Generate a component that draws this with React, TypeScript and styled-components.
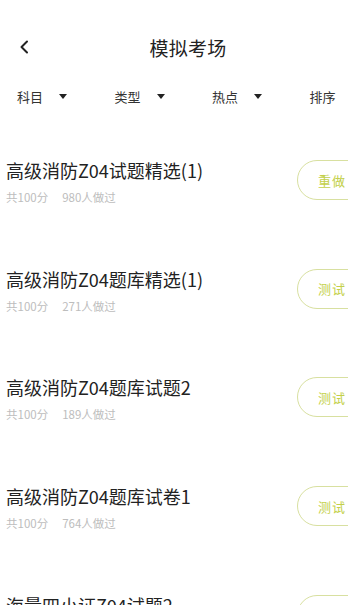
import React from "react";
import styled, { createGlobalStyle } from "styled-components";

const Global = createGlobalStyle`
  html, body { margin: 0; padding: 0; background: #fff; overflow: hidden; }
  body { font-family: "Noto Sans CJK SC", "Noto Sans", sans-serif; }
`;

const Page = styled.div`
  width: 390px;
  height: 605px;
  overflow: hidden;
  background: #fff;
`;

const Header = styled.div`
  position: relative;
  height: 50px;
  margin-top: 22px;
  display: flex;
  align-items: center;
  justify-content: center;
  padding-right: 14px;
`;

const Back = styled.button`
  position: absolute;
  left: 14px;
  top: 13px;
  width: 20px;
  height: 24px;
  border: 0;
  padding: 0;
  background: transparent;
  display: flex;
  align-items: center;
  justify-content: center;
`;

const Title = styled.div`
  font-size: 19px;
  color: #222;
  letter-spacing: 0.3px;
`;

const Tabs = styled.div`
  height: 48px;
  display: flex;
  align-items: center;
  padding-left: 17px;
`;

const Tab = styled.div`
  flex: 0 0 97.5px;
  display: flex;
  align-items: center;
  gap: 16px;
  font-size: 13px;
  color: #333;
`;

const Caret = styled.span`
  width: 0;
  height: 0;
  border-left: 4px solid transparent;
  border-right: 4px solid transparent;
  border-top: 5px solid #222;
`;

const List = styled.div`
  padding-top: 6.5px;
`;

const Row = styled.div`
  height: 108.7px;
  box-sizing: border-box;
  padding: 33.5px 13px 0 6px;
  display: flex;
  align-items: flex-start;
`;

const Info = styled.div`
  flex: 1;
  display: flex;
  flex-direction: column;
  gap: 10px;
`;

const ItemTitle = styled.div`
  font-size: 18px;
  line-height: 20px;
  color: #222;
  white-space: nowrap;
`;

const Meta = styled.div`
  display: flex;
  gap: 14px;
  font-size: 11.5px;
  line-height: 14px;
  color: #bdbdbd;
`;

const Action = styled.button`
  flex: 0 0 80px;
  height: 40px;
  box-sizing: border-box;
  border: 1px solid #d8e0a0;
  border-radius: 20px;
  background: #fff;
  color: #c3d04a;
  font-family: inherit;
  font-size: 13px;
  text-align: left;
  padding: 0 0 0 20px;
  letter-spacing: 1px;
`;

const items = [
  { title: "高级消防Z04试题精选(1)", count: "980人做过", action: "重做" },
  { title: "高级消防Z04题库精选(1)", count: "271人做过", action: "测试" },
  { title: "高级消防Z04题库试题2", count: "189人做过", action: "测试" },
  { title: "高级消防Z04题库试卷1", count: "764人做过", action: "测试" },
  { title: "海量四小证Z04试题2", count: "512人做过", action: "测试" },
];

export default function App() {
  return (
    <Page>
      <Global />
      <Header>
        <Back aria-label="返回">
          <svg width="10" height="14" viewBox="0 0 10 14">
            <path d="M8 1.5 L2.5 7 L8 12.5" fill="none" stroke="#222" strokeWidth="2" strokeLinecap="round" strokeLinejoin="round" />
          </svg>
        </Back>
        <Title>模拟考场</Title>
      </Header>
      <Tabs>
        <Tab>科目<Caret /></Tab>
        <Tab>类型<Caret /></Tab>
        <Tab>热点<Caret /></Tab>
        <Tab>排序</Tab>
      </Tabs>
      <List>
        {items.map((it, i) => (
          <Row key={i}>
            <Info>
              <ItemTitle>{it.title}</ItemTitle>
              <Meta>
                <span>共100分</span>
                <span>{it.count}</span>
              </Meta>
            </Info>
            <Action>{it.action}</Action>
          </Row>
        ))}
      </List>
    </Page>
  );
}
